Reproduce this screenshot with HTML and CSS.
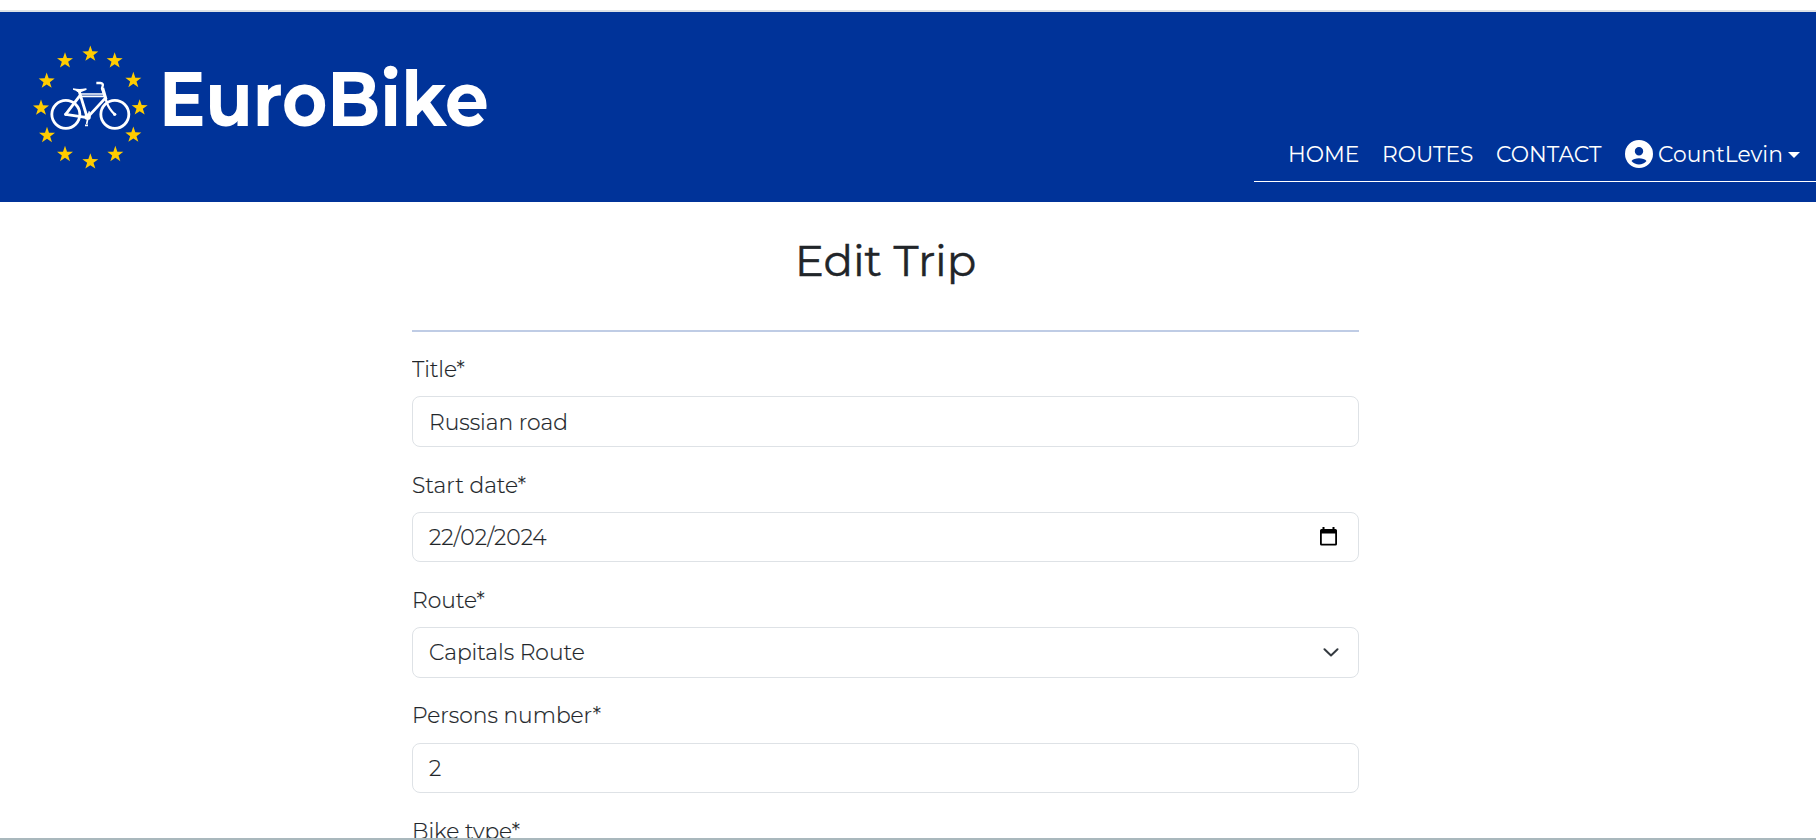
FILE: index.html
```html
<!DOCTYPE html>
<html lang="en">
<head>
<meta charset="utf-8">
<title>EuroBike - Edit Trip</title>
<link rel="stylesheet" href="styles.css">
</head>
<body>
<header class="header">
  <a class="brand">
    <svg class="logo" viewBox="96 129 378 384">
      <defs><path id="star" d="M0-25.500 6-8 24-7.600 9.500 3.500 15 20.500 0 10.500-15 20.500-9.500 3.500-24-7.600-6-8Z"/></defs>
      <g fill="#ffcc00">
        <use href="#star" x="271" y="162"/><use href="#star" x="344" y="182"/><use href="#star" x="400" y="241"/>
        <use href="#star" x="419" y="323"/><use href="#star" x="400" y="405"/><use href="#star" x="346" y="463"/>
        <use href="#star" x="271" y="485"/><use href="#star" x="195" y="463"/><use href="#star" x="141" y="406"/>
        <use href="#star" x="123" y="324"/><use href="#star" x="140" y="243"/><use href="#star" x="195" y="182"/>
      </g>
      <g fill="none" stroke="#fff" stroke-width="8.500" stroke-linejoin="round">
        <circle cx="197.500" cy="343" r="42"/><circle cx="344.500" cy="343" r="42"/>
        <path d="M197 343 242 284M237 272 262 354M197 343 262 353 318 292" stroke-width="8.500"/>
        <path d="M242 282H312M242 289H312" stroke-width="5"/>
        <path d="M289 249H301Q311 250 308 258L306 265 320 306Q326 326 344 343" stroke-width="7"/>
        <path d="M308 264 318 298" stroke-width="9"/>
        <path d="M268 334 260 372M255 376H264" stroke-width="5"/>
        <circle cx="263" cy="350" r="7" stroke-width="5"/>
      </g>
      <path d="M219 265Q239 269 258 265 263 269 257 271L242 277 232 276Q230 272 219 269Z" fill="#fff"/>
      <circle cx="197" cy="343" r="5" fill="#fff"/><circle cx="344" cy="343" r="5" fill="#fff"/>
    </svg>
    <span class="brand-name">EuroBike</span>
  </a>
  <nav class="nav">
    <a class="nav-link home">HOME</a>
    <a class="nav-link routes">ROUTES</a>
    <a class="nav-link contact">CONTACT</a>
    <a class="user">
      <svg class="avatar" viewBox="0 0 28 28"><path fill="#fff" fill-rule="evenodd" d="M14 0a14 14 0 1 0 0 28 14 14 0 1 0 0-28ZM14 7a4.200 4.200 0 1 1 0 8.400 4.200 4.200 0 1 1 0-8.400ZM6.500 21C9 17.300 19 17.300 21.500 21 18 25.500 10 25.500 6.500 21Z"/></svg>
      <span class="user-name">CountLevin</span>
      <svg class="caret" viewBox="0 0 12 6"><path fill="#fff" d="M0 0H12L6 6Z"/></svg>
    </a>
  </nav>
</header>
<main class="page">
  <h1 class="heading">Edit Trip</h1>
  <form class="form">
    <div class="field"><label class="label">Title*</label><div class="control tall"><span>Russian road</span></div></div>
    <div class="field"><label class="label">Start date*</label><div class="control"><span>22/02/2024</span>
      <svg class="calendar" viewBox="0 0 17 19"><path fill="#000" fill-rule="evenodd" d="M2.500 0H4.500V2H12.500V0H14.500V2H15.500Q17 2 17 3.500V17Q17 18.500 15.500 18.500H1.500Q0 18.500 0 17V3.500Q0 2 1.500 2H2.500ZM1.800 6.500V16.700H15.200V6.500Z"/></svg></div></div>
    <div class="field"><label class="label">Route*</label><div class="control tall select"><span>Capitals Route</span>
      <svg class="chevron" viewBox="0 0 16 9"><path d="M1.500 1.300 8 7.500 14.500 1.300" fill="none" stroke="#343a40" stroke-width="2" stroke-linecap="round" stroke-linejoin="round"/></svg></div></div>
    <div class="field"><label class="label raised">Persons number*</label><div class="control"><span>2</span></div></div>
    <div class="field"><label class="label">Bike type*</label></div>
  </form>
</main>
</body>
</html>
```
FILE: styles.css
```css
* { box-sizing: border-box; }
html { height: 100%; overflow: hidden; }
body {
  margin: 0;
  height: 840px;
  overflow: hidden;
  display: flex;
  flex-direction: column;
  padding-top: 10px;
  border-bottom: 2px solid #a9b8bd;
  background: #fff;
  color: #212529;
  font-family: Montserrat, Inter, sans-serif;
  font-size: 21.8px;
  font-weight: 300;
}
.header {
  flex: none;
  height: 192px;
  border-top: 2px solid #dee2e6;
  background: #003399;
  color: #fff;
  display: flex;
  justify-content: space-between;
  padding-left: 32px;
}
.brand { display: flex; padding-top: 31px; }
.logo { width: 126px; height: 128px; }
.brand-name {
  font-size: 76px;
  font-weight: 700;
  line-height: 86px;
  padding-top: 13px;
  margin-left: 1px;
  white-space: nowrap;
  transform: scaleX(0.911);
  transform-origin: left;
}
.nav {
  width: 562px;
  height: 54px;
  margin-top: 116px;
  padding-left: 34px;
  border-bottom: 1px solid #fff;
  display: flex;
  line-height: 53px;
  font-weight: 400;
  white-space: nowrap;
}
.nav-link { flex: none; }
.home { width: 94px; }
.routes { width: 114px; }
.contact { width: 129px; }
.user { display: flex; align-items: center; }
.avatar { width: 28px; height: 28px; margin: -1px 5px 0 0; }
.user-name { width: 130px; }
.caret { width: 12px; height: 6px; }
.page { width: 947px; margin-left: 412px; flex: 1; min-height: 0; overflow: hidden; }
.heading {
  margin: 0;
  height: 130px;
  padding-top: 30px;
  border-bottom: 2px solid #bfcce5;
  text-align: center;
  font-size: 43.6px;
  font-weight: 400;
  line-height: 58px;
  -webkit-text-stroke: 0.4px #212529;
}
.form { padding-top: 17px; -webkit-text-stroke: 0.2px #212529; }
.field { height: 115.5px; white-space: nowrap; }
.label { display: block; width: max-content; line-height: 40px; margin-bottom: 7px; }
.raised { line-height: 38px; margin-bottom: 9px; }
.control {
  height: 50px;
  padding: 0 17px 0 16px;
  border: 1px solid #dee2e6;
  border-radius: 8px;
  display: flex;
  align-items: center;
  justify-content: space-between;
}
.tall { height: 51px; }
.select span { margin-top: -1px; }
.calendar { width: 17px; height: 19px; margin: -1px 4px 0 0; }
.chevron { width: 16px; height: 9px; margin-right: 2px; }
```
